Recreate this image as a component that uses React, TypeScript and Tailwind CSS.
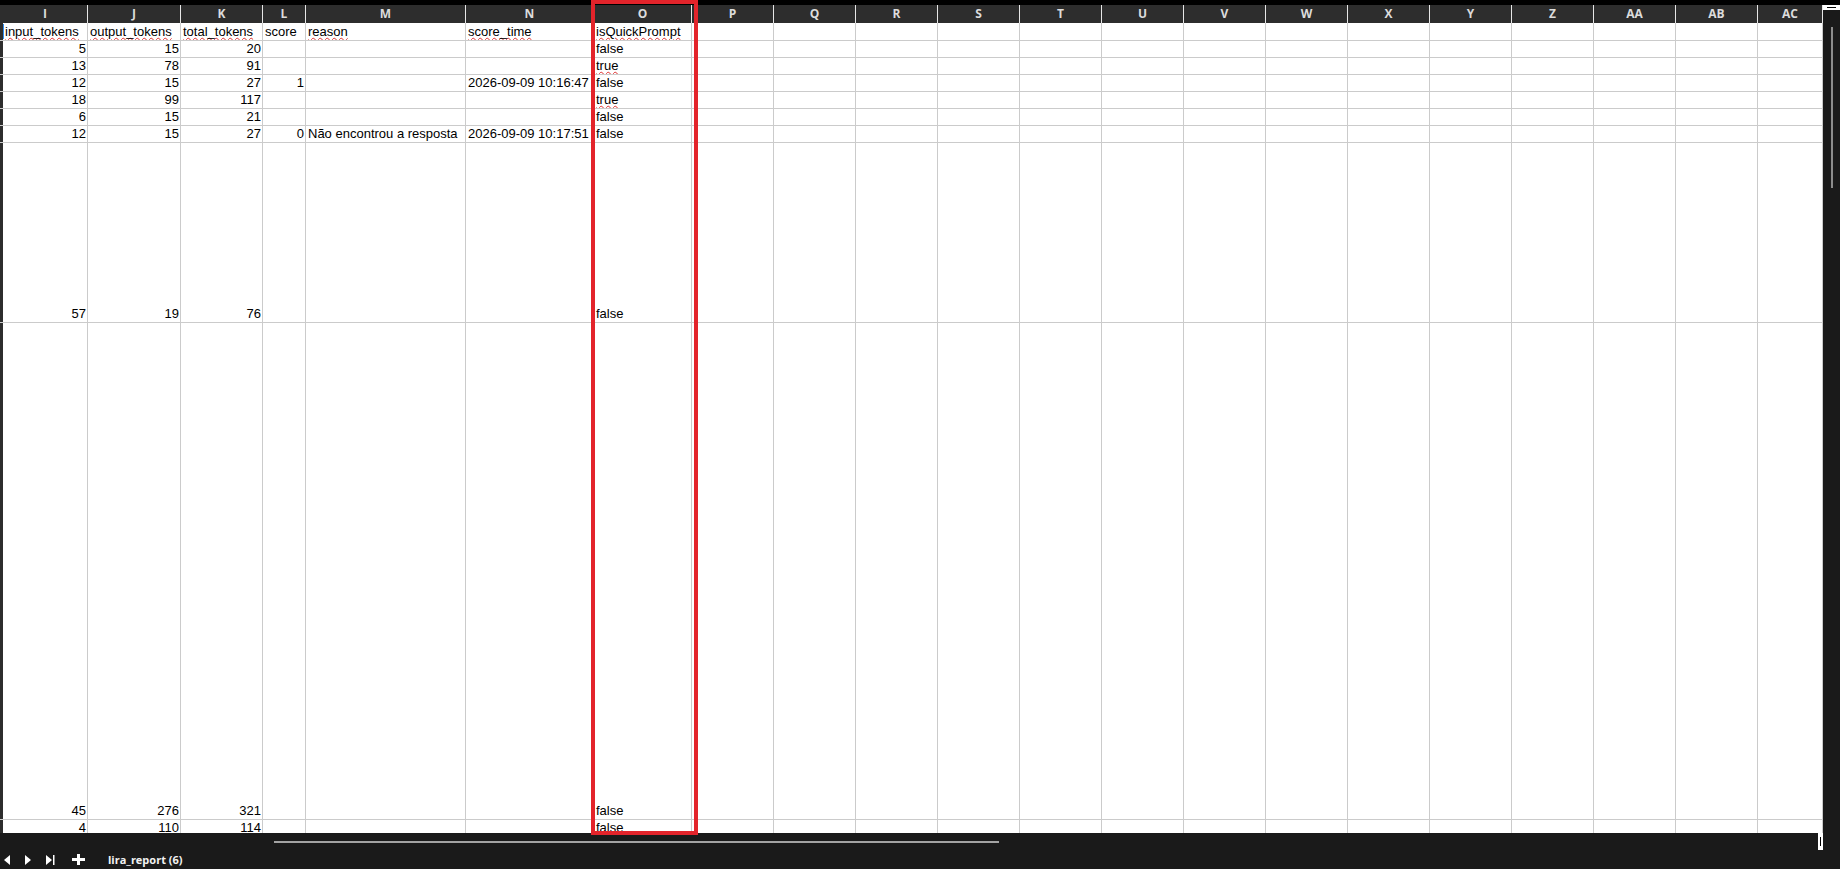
import React from "react";

type Col = { name: string; w: string };
type Cell = string | number | null;
type Row = { h: string; cells: Cell[] };

const cols: Col[] = [
  { name: "I", w: "w-[85px]" },
  { name: "J", w: "w-[93px]" },
  { name: "K", w: "w-[82px]" },
  { name: "L", w: "w-[43px]" },
  { name: "M", w: "w-[160px]" },
  { name: "N", w: "w-[128px]" },
  { name: "O", w: "w-[98px]" },
  { name: "P", w: "w-[82px]" },
  { name: "Q", w: "w-[82px]" },
  { name: "R", w: "w-[82px]" },
  { name: "S", w: "w-[82px]" },
  { name: "T", w: "w-[82px]" },
  { name: "U", w: "w-[82px]" },
  { name: "V", w: "w-[82px]" },
  { name: "W", w: "w-[82px]" },
  { name: "X", w: "w-[82px]" },
  { name: "Y", w: "w-[82px]" },
  { name: "Z", w: "w-[82px]" },
  { name: "AA", w: "w-[82px]" },
  { name: "AB", w: "w-[82px]" },
  { name: "AC", w: "w-[65px]" },
];

const rows: Row[] = [
  { h: "h-[18px]", cells: ["input_tokens", "output_tokens", "total_tokens", "score", "reason", "score_time", "isQuickPrompt"] },
  { h: "h-[17px]", cells: [5, 15, 20, null, null, null, "false"] },
  { h: "h-[17px]", cells: [13, 78, 91, null, null, null, "true"] },
  { h: "h-[17px]", cells: [12, 15, 27, 1, null, "2026-09-09 10:16:47", "false"] },
  { h: "h-[17px]", cells: [18, 99, 117, null, null, null, "true"] },
  { h: "h-[17px]", cells: [6, 15, 21, null, null, null, "false"] },
  { h: "h-[17px]", cells: [12, 15, 27, 0, "Não encontrou a resposta", "2026-09-09 10:17:51", "false"] },
  { h: "h-[180px]", cells: [57, 19, 76, null, null, null, "false"] },
  { h: "h-[497px]", cells: [45, 276, 321, null, null, null, "false"] },
  { h: "h-[17px]", cells: [4, 110, 114, null, null, null, "false"] },
];

// words the spell checker flags with a red squiggle
const flagged = new Set(["input_tokens", "output_tokens", "total_tokens", "reason", "score_time", "isQuickPrompt", "true"]);

const SheetCell = ({ col, value, cursor }: { col: Col; value: Cell; cursor?: boolean }) => {
  const isNum = typeof value === "number";
  return (
    <div
      className={`${col.w} relative shrink-0 flex items-end overflow-hidden whitespace-nowrap border-r border-b border-[#cbcbcb] bg-white ${isNum ? "justify-end pr-[1px]" : "pl-[2px]"}`}
    >
      {cursor && <span className="absolute left-0 top-[1px] h-[15px] w-[1px] bg-[#2f8cf0]" />}
      {value !== null && (
        <span
          className={`leading-[16px] text-[13px] text-black ${
            typeof value === "string" && flagged.has(value)
              ? "underline decoration-wavy decoration-[#e0312f] decoration-1 underline-offset-[1px]"
              : ""
          }`}
        >
          {value}
        </span>
      )}
    </div>
  );
};

const App = () => {
  return (
    <div className="relative w-[1840px] h-[869px] overflow-hidden bg-[#1a1a1a] flex flex-col" style={{ fontFamily: '"Liberation Sans", Arial, sans-serif' }}>
      <div className="h-[5px] shrink-0 bg-black" />

      <div className="flex h-[828px] shrink-0">
        {/* grid */}
        <div className="w-[1823px] shrink-0 overflow-hidden bg-white">
          {/* column letters */}
          <div className="flex h-[18px]">
            <div className="w-[3px] shrink-0 bg-[#2d2d2d]" />
            {cols.map((c) => (
              <div
                key={c.name}
                className={`${c.w} shrink-0 flex items-center justify-center border-r border-[#e6e6e6] bg-[#2d2d2d] text-[12px] font-bold text-[#dcdcdc]`}
                style={{ fontFamily: '"Open Sans", sans-serif' }}
              >
                {c.name}
              </div>
            ))}
          </div>

          {rows.map((r, ri) => (
            <div key={ri} className={`flex ${r.h}`}>
              <div className="w-[3px] shrink-0 bg-[#2d2d2d] border-b border-[#cbcbcb]" />
              {cols.map((c, ci) => (
                <SheetCell key={c.name} col={c} value={ci < r.cells.length ? r.cells[ci] : null} cursor={ri === 0 && ci === 0} />
              ))}
            </div>
          ))}
        </div>

        {/* vertical scrollbar */}
        <div className="w-[17px] shrink-0 flex flex-col bg-[#1a1a1a]">
          <div className="h-[5px] bg-white flex items-center justify-center">
            <div className="w-[9px] h-[1px] bg-black" />
          </div>
          <div className="ml-[8px] mt-[17px] w-[2px] h-[161px] bg-[#8c8c8c]" />
        </div>
      </div>

      {/* sheet tabs */}
      <div className="relative flex-1 flex flex-col bg-[#1a1a1a]">
        <div className="h-[8px]" />
        <div className="ml-[274px] w-[725px] h-[2px] bg-[#a3a3a3]" />
        <div className="flex-1 flex items-end pb-[3px] pl-[4px]">
          <svg width="6" height="10" viewBox="0 0 6 10" className="mb-[1px]">
            <polygon points="6,0 6,10 0,5" fill="#fff" />
          </svg>
          <svg width="6" height="10" viewBox="0 0 6 10" className="ml-[15px] mb-[1px]">
            <polygon points="0,0 6,5 0,10" fill="#fff" />
          </svg>
          <svg width="9" height="10" viewBox="0 0 9 10" className="ml-[15px] mb-[1px]">
            <polygon points="0,0 6,5 0,10" fill="#fff" />
            <rect x="7" y="0" width="1.5" height="10" fill="#fff" />
          </svg>
          <svg width="13" height="11" viewBox="0 0 13 11" className="ml-[17px] mb-[1px]">
            <rect x="0" y="4" width="13" height="3" fill="#fff" />
            <rect x="5" y="0" width="3" height="11" fill="#fff" />
          </svg>
          <span
            className="ml-[23px] text-[11px] font-bold leading-[13px] text-[#f2f2f2]"
            style={{ fontFamily: '"Open Sans", sans-serif' }}
          >
            lira_report (6)
          </span>
        </div>
        <div className="absolute right-[17px] top-0 w-[5px] h-[17px] bg-white">
          <div className="ml-[2px] mt-[4px] w-[1px] h-[9px] bg-black" />
        </div>
      </div>

      {/* highlight frame around column O */}
      <div className="absolute left-[591px] top-0 w-[107px] h-[835px] border-4 border-[#e3242b] pointer-events-none" />
    </div>
  );
};

export default App;
